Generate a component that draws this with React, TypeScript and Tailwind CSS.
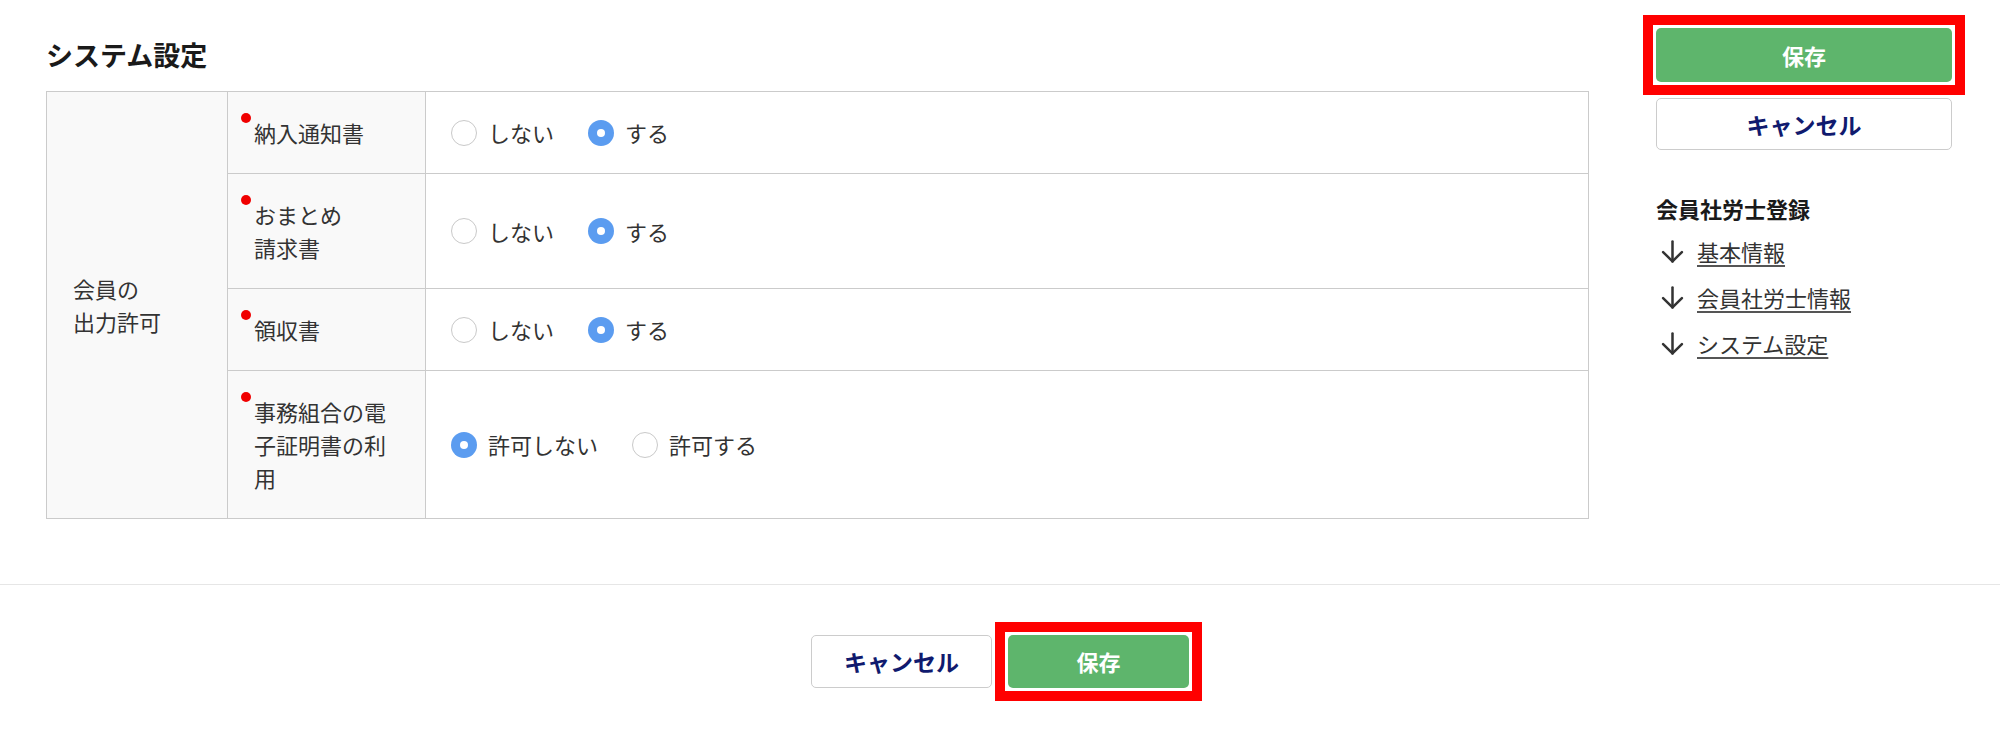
import type { ReactNode } from 'react';

const FONT = { fontFamily: '"Noto Sans CJK JP", "Noto Sans", sans-serif' };

function Radio({ checked, label }: { checked: boolean; label: string }) {
  return (
    <label className="flex items-center gap-[11px]">
      {checked ? (
        <span className="w-[26px] h-[26px] rounded-full bg-[#5b9cf0] flex items-center justify-center shrink-0">
          <span className="w-[8px] h-[8px] rounded-full bg-white" />
        </span>
      ) : (
        <span className="w-[26px] h-[26px] rounded-full border-[1.5px] border-[#c9c9c9] bg-white shrink-0" />
      )}
      <span>{label}</span>
    </label>
  );
}

function Row({ label, options, value, first }: { label: ReactNode; options: string[]; value: number; first?: ReactNode }) {
  return (
    <tr>
      {first}
      <td className="w-[198px] border border-[#cbcbcb] bg-[#f9f9f9] pl-[13px] pr-[20px] py-[24px] align-middle">
        <div className="flex items-start">
          <span className="w-[10px] h-[10px] rounded-full bg-[#f00000] mt-[-3px] mr-[3px] shrink-0" />
          <div>{label}</div>
        </div>
      </td>
      <td className="border border-[#cbcbcb] bg-white pl-[25px] py-[24px] align-middle">
        <div className="flex items-center gap-[34px]">
          {options.map((o, i) => (
            <Radio key={o} label={o} checked={i === value} />
          ))}
        </div>
      </td>
    </tr>
  );
}

function ArrowDown() {
  return (
    <svg width="23" height="23" viewBox="0 0 22 22" fill="none" stroke="#333" strokeWidth="2.4" strokeLinecap="round" strokeLinejoin="round">
      <path d="M11 1.5V20.5" />
      <path d="M2 11.5L11 20.5L20 11.5" />
    </svg>
  );
}

// red annotation frame drawn over a button
function Highlight({ children }: { children: ReactNode }) {
  return (
    <div className="relative">
      {children}
      <span className="pointer-events-none absolute -inset-[13px] border-[10px] border-[#ff0000]" />
    </div>
  );
}

export default function App() {
  const yesNo = ['しない', 'する'];

  return (
    <div className="w-[2000px] bg-white text-[#333] text-[22px] leading-[33px]" style={FONT}>
      <div className="flex gap-[67px] pl-[46px] pr-[48px]">
        {/* Main */}
        <div className="flex-1 pt-[37px]">
          <h2 className="text-[27px] leading-[36px] font-bold text-[#1a1a1a] mb-[18px]">システム設定</h2>
          <table className="w-full border-collapse">
            <tbody>
              <Row
                first={
                  <td rowSpan={4} className="w-[181px] border border-[#cbcbcb] bg-[#f9f9f9] pl-[26px] align-middle">
                    会員の
                    <br />
                    出力許可
                  </td>
                }
                label="納入通知書"
                options={yesNo}
                value={1}
              />
              <Row
                label={
                  <>
                    おまとめ
                    <br />
                    請求書
                  </>
                }
                options={yesNo}
                value={1}
              />
              <Row label="領収書" options={yesNo} value={1} />
              <Row label="事務組合の電子証明書の利用" options={['許可しない', '許可する']} value={0} />
            </tbody>
          </table>
        </div>

        {/* Sidebar */}
        <div className="w-[296px] pt-[28px]">
          <Highlight>
            <button className="w-full h-[54px] rounded-[5px] bg-[#5eb56c] text-white font-bold text-[22px]">保存</button>
          </Highlight>
          <button className="w-full h-[52px] mt-[16px] rounded-[5px] border-[1.5px] border-[#cccccc] bg-white text-[#101a6e] font-bold text-[23px]">
            キャンセル
          </button>
          <div className="mt-[43px] text-[22px] leading-[30px] font-bold text-[#1a1a1a]">会員社労士登録</div>
          <ul className="mt-[13px] flex flex-col gap-[16px] text-[22px] leading-[30px]">
            {['基本情報', '会員社労士情報', 'システム設定'].map((t) => (
              <li key={t} className="flex items-center gap-[13px] pl-[5px]">
                <ArrowDown />
                <a className="underline underline-offset-[4px] decoration-[#555] text-[#333]">{t}</a>
              </li>
            ))}
          </ul>
        </div>
      </div>

      {/* Footer */}
      <div className="mt-[65px] border-t border-[#e6e6e6] pt-[50px] pb-[44px] flex justify-center gap-[16px]">
        <button className="w-[181px] h-[53px] rounded-[5px] border-[1.5px] border-[#cccccc] bg-white text-[#101a6e] font-bold text-[23px]">
          キャンセル
        </button>
        <Highlight>
          <button className="w-[181px] h-[53px] rounded-[5px] bg-[#5eb56c] text-white font-bold text-[22px]">保存</button>
        </Highlight>
      </div>
    </div>
  );
}
